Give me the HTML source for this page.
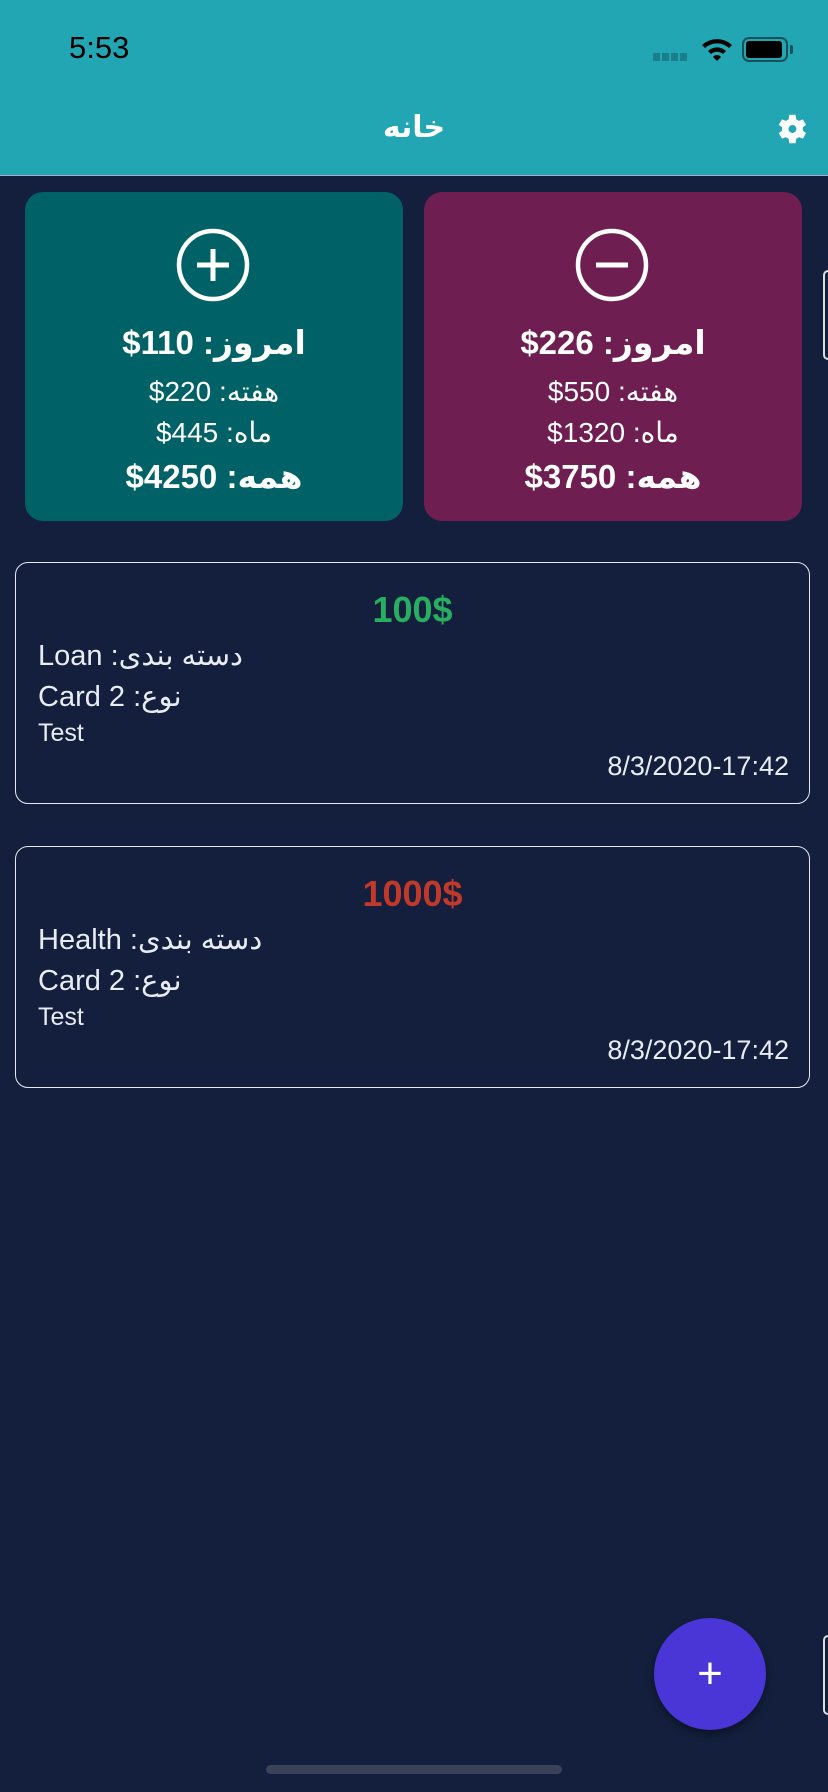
<!DOCTYPE html>
<html><head><meta charset="utf-8"><style>
*{margin:0;padding:0;box-sizing:border-box}
body{width:828px;height:1792px;background:#131f3c;position:relative;overflow:hidden;font-family:"Liberation Sans","DejaVu Sans",sans-serif;color:#fff}
.hdr{position:absolute;left:0;top:0;width:828px;height:176px;background:#22a6b3;border-bottom:1px solid #aac}
.abs{position:absolute}
.card{position:absolute;top:192px;width:378px;height:329px;border-radius:18px;text-align:center}
.card .l{position:absolute;left:0;width:100%;white-space:nowrap;direction:rtl;text-align:center}
.b{font-weight:bold;font-size:33px}
.n{font-size:28px}
.item{position:absolute;left:15px;width:795px;height:242px;border:1.5px solid #e8e8f0;border-radius:13px;color:#e8ecf4}
.item div{position:absolute;white-space:nowrap}
</style></head><body>
<div class="hdr"></div>
<div class="abs" style="left:69px;top:30px;font-size:31px;color:#000;font-weight:500">5:53</div>
<div class="abs" style="left:653px;top:53px;width:36px;height:8px;background:repeating-linear-gradient(90deg,#1a7f8a 0 7px,transparent 7px 9px)"></div>
<svg class="abs" style="left:700px;top:36px" width="34" height="26" viewBox="0 0 34 26"><path d="M2 9a22 22 0 0 1 30 0l-3 3a18 18 0 0 0-24 0z M8 15a13 13 0 0 1 18 0l-3 3a9 9 0 0 0-12 0z M13 21a5 5 0 0 1 8 0l-4 4z" fill="#000"/></svg>
<div class="abs" style="left:742px;top:37px;width:46px;height:25px;border:2.5px solid #1a5058;border-radius:7px"></div>
<div class="abs" style="left:746px;top:41px;width:36px;height:17px;background:#000;border-radius:3px"></div>
<div class="abs" style="left:790px;top:45px;width:3px;height:9px;background:#1a5058;border-radius:0 2px 2px 0"></div>
<div class="abs" style="left:0;width:828px;top:110px;text-align:center;font-size:30px;font-weight:bold">خانه</div>
<svg class="abs" style="left:772px;top:110px" width="38" height="38" viewBox="0 0 24 24"><path fill="#fff" d="M19.4 13a7.5 7.5 0 0 0 0-2l2.1-1.6-2-3.5-2.5 1a7 7 0 0 0-1.7-1L14.9 3h-4l-.4 2.9a7 7 0 0 0-1.7 1l-2.5-1-2 3.5L6.4 11a7.5 7.5 0 0 0 0 2l-2.1 1.6 2 3.5 2.5-1a7 7 0 0 0 1.7 1l.4 2.9h4l.4-2.9a7 7 0 0 0 1.7-1l2.5 1 2-3.5zM12.9 14.5a2.5 2.5 0 1 1 0-5 2.5 2.5 0 0 1 0 5z"/></svg>
<div class="card" style="left:25px;background:#006266">
<svg class="abs" style="left:150px;top:35px" width="76" height="76" viewBox="0 0 76 76"><circle cx="38" cy="38" r="34" fill="none" stroke="#fff" stroke-width="4.5"/><path d="M38 22v32M22 38h32" stroke="#fff" stroke-width="5"/></svg>
<div class="l b" style="top:131px">امروز: &#x2066;$110&#x2069;</div>
<div class="l n" style="top:183px">هفته: &#x2066;$220&#x2069;</div>
<div class="l n" style="top:224px">ماه: &#x2066;$445&#x2069;</div>
<div class="l b" style="top:265px">همه: &#x2066;$4250&#x2069;</div>
</div>
<div class="card" style="left:424px;background:#6f1e51">
<svg class="abs" style="left:150px;top:35px" width="76" height="76" viewBox="0 0 76 76"><circle cx="38" cy="38" r="34" fill="none" stroke="#fff" stroke-width="4.5"/><path d="M22 38h32" stroke="#fff" stroke-width="5"/></svg>
<div class="l b" style="top:131px">امروز: &#x2066;$226&#x2069;</div>
<div class="l n" style="top:183px">هفته: &#x2066;$550&#x2069;</div>
<div class="l n" style="top:224px">ماه: &#x2066;$1320&#x2069;</div>
<div class="l b" style="top:265px">همه: &#x2066;$3750&#x2069;</div>
</div>
<div class="abs" style="left:823px;top:270px;width:10px;height:90px;border:2px solid #ddd;border-radius:8px"></div>
<div class="item" style="top:562px">
<div style="left:0;width:100%;text-align:center;top:26px;font-size:36px;font-weight:bold;color:#27ae60">100$</div>
<div style="left:22px;top:75px;font-size:29px">Loan :دسته بندی</div>
<div style="left:22px;top:116px;font-size:29px">Card 2 :نوع</div>
<div style="left:22px;top:156px;font-size:25px">Test</div>
<div style="right:20px;top:188px;font-size:27px">8/3/2020-17:42</div>
</div>
<div class="item" style="top:846px">
<div style="left:0;width:100%;text-align:center;top:26px;font-size:36px;font-weight:bold;color:#c0392b">1000$</div>
<div style="left:22px;top:75px;font-size:29px">Health :دسته بندی</div>
<div style="left:22px;top:116px;font-size:29px">Card 2 :نوع</div>
<div style="left:22px;top:156px;font-size:25px">Test</div>
<div style="right:20px;top:188px;font-size:27px">8/3/2020-17:42</div>
</div>
<div class="abs" style="left:654px;top:1618px;width:112px;height:112px;border-radius:50%;background:#4a35d6;box-shadow:0 4px 8px rgba(0,0,0,.4)"></div>
<div class="abs" style="left:654px;top:1644px;width:112px;text-align:center;font-size:44px;line-height:60px">+</div>
<div class="abs" style="left:823px;top:1635px;width:10px;height:80px;border:2px solid #ddd;border-radius:8px"></div>
<div class="abs" style="left:266px;top:1765px;width:296px;height:9px;border-radius:5px;background:#3a4257"></div>
</body></html>
